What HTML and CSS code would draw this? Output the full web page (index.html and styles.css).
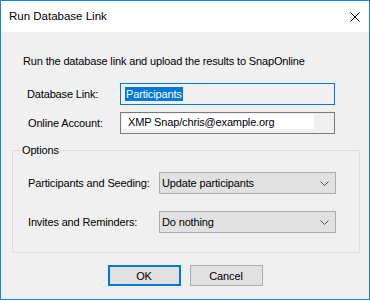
FILE: index.html
```html
<!DOCTYPE html>
<html>
<head>
<meta charset="utf-8">
<title>Run Database Link</title>
<link rel="stylesheet" href="styles.css">
</head>
<body>
<div class="window">
  <div class="titlebar">
    <span class="title">Run Database Link</span>
    <span class="close">
      <svg width="10" height="10" viewBox="0 0 10 10"><path d="M0.5 0.5L9.5 9.5M9.5 0.5L0.5 9.5" stroke="#000" stroke-width="1" fill="none"/></svg>
    </span>
  </div>
  <div class="content">
    <div class="intro">Run the database link and upload the results to SnapOnline</div>
    <div class="field-row row-link">
      <span class="label">Database Link:</span>
      <div class="textbox focused"><span class="selected">Participants</span></div>
    </div>
    <div class="field-row row-account">
      <span class="label label-account">Online Account:</span>
      <div class="textbox plain"><span class="account-value">XMP Snap/chris@example.org</span><span class="account-pad"></span></div>
    </div>
    <fieldset class="group">
      <legend class="group-title">Options</legend>
      <div class="option-row">
        <span class="opt-label">Participants and Seeding:</span>
        <div class="combo"><span class="combo-text">Update participants</span>
          <svg class="chev" width="9" height="5" viewBox="0 0 9 5"><path d="M0.5 0.5L4.5 4.5L8.5 0.5" stroke="#555" stroke-width="1" fill="none"/></svg>
        </div>
      </div>
      <div class="option-row second">
        <span class="opt-label">Invites and Reminders:</span>
        <div class="combo"><span class="combo-text">Do nothing</span>
          <svg class="chev" width="9" height="5" viewBox="0 0 9 5"><path d="M0.5 0.5L4.5 4.5L8.5 0.5" stroke="#555" stroke-width="1" fill="none"/></svg>
        </div>
      </div>
    </fieldset>
    <div class="buttons">
      <button class="btn default">OK</button>
      <button class="btn">Cancel</button>
    </div>
  </div>
</div>
</body>
</html>
```
FILE: styles.css
```css
html, body {
  margin: 0;
  padding: 0;
  background: #ffffff;
}
body {
  font-family: "Liberation Sans", Arial, sans-serif;
  font-size: 11px;
  letter-spacing: -0.15px;
  color: #000;
}
.window {
  width: 370px;
  height: 300px;
  box-sizing: border-box;
  border: 1px solid #1883d7;
  display: flex;
  flex-direction: column;
  background: #f0f0f0;
}
.titlebar {
  height: 31px;
  flex: none;
  background: #ffffff;
  display: flex;
  align-items: center;
  padding-left: 8px;
}
.title {
  font-size: 11.5px;
  letter-spacing: 0;
  line-height: 15px;
}
.close {
  margin-left: auto;
  margin-right: 9px;
  width: 10px;
  height: 10px;
  display: flex;
}
.content {
  flex: 1;
  display: flex;
  flex-direction: column;
  padding-top: 22px;
}
.intro {
  margin-left: 22px;
  line-height: 15px;
  height: 15px;
  white-space: nowrap;
}
.field-row {
  display: flex;
  align-items: center;
  padding-left: 26px;
}
.row-link {
  margin-top: 14px;
}
.row-account {
  margin-top: 7px;
}
.label {
  width: 93px;
  flex: none;
  white-space: nowrap;
}
.label-account {
  padding-left: 1px;
  width: 92px;
}
.textbox {
  width: 215px;
  height: 22px;
  box-sizing: border-box;
  display: flex;
  align-items: center;
}
.focused {
  border: 1px solid #0078d7;
  background: #f0f0f0;
  padding-left: 4px;
}
.selected {
  background: #0078d7;
  color: #ffffff;
  line-height: 14px;
  padding: 0 1px 0 1px;
}
.plain {
  border: 1px solid #7a7a7a;
  background: #f0f0f0;
  padding: 1px;
  align-items: stretch;
}
.account-value {
  width: 186px;
  background: #ffffff;
  padding-left: 6px;
  display: flex;
  align-items: center;
  margin-bottom: 3px;
  white-space: nowrap;
}
.account-pad {
  flex: 1;
}
.group {
  margin: 9px 0 0 11px;
  width: 348px;
  box-sizing: border-box;
  border: 1px solid #dcdcdc;
  padding: 14px 0 19px 15px;
  min-width: 0;
}
.group-title {
  padding: 0 1px;
  margin-left: -7px;
  line-height: 15px;
}
.option-row {
  display: flex;
  align-items: center;
}
.option-row.second {
  margin-top: 17px;
}
.opt-label {
  width: 131px;
  flex: none;
  white-space: nowrap;
}
.combo {
  width: 177px;
  height: 22px;
  box-sizing: border-box;
  border: 1px solid #adadad;
  background: #e1e1e1;
  display: flex;
  align-items: center;
  padding-left: 2px;
  padding-right: 6px;
}
.combo-text {
  flex: 1;
  white-space: nowrap;
}
.chev {
  flex: none;
}
.buttons {
  display: flex;
  justify-content: center;
  gap: 9px;
  margin-top: 12px;
}
.btn {
  font-family: "Liberation Sans", Arial, sans-serif;
  font-size: 11px;
  letter-spacing: -0.15px;
  color: #000;
  width: 73px;
  height: 21px;
  box-sizing: border-box;
  background: #e1e1e1;
  border: 1px solid #adadad;
  padding: 0;
  margin: 0;
  border-radius: 0;
}
.btn.default {
  border: 2px solid #0078d7;
}
```
